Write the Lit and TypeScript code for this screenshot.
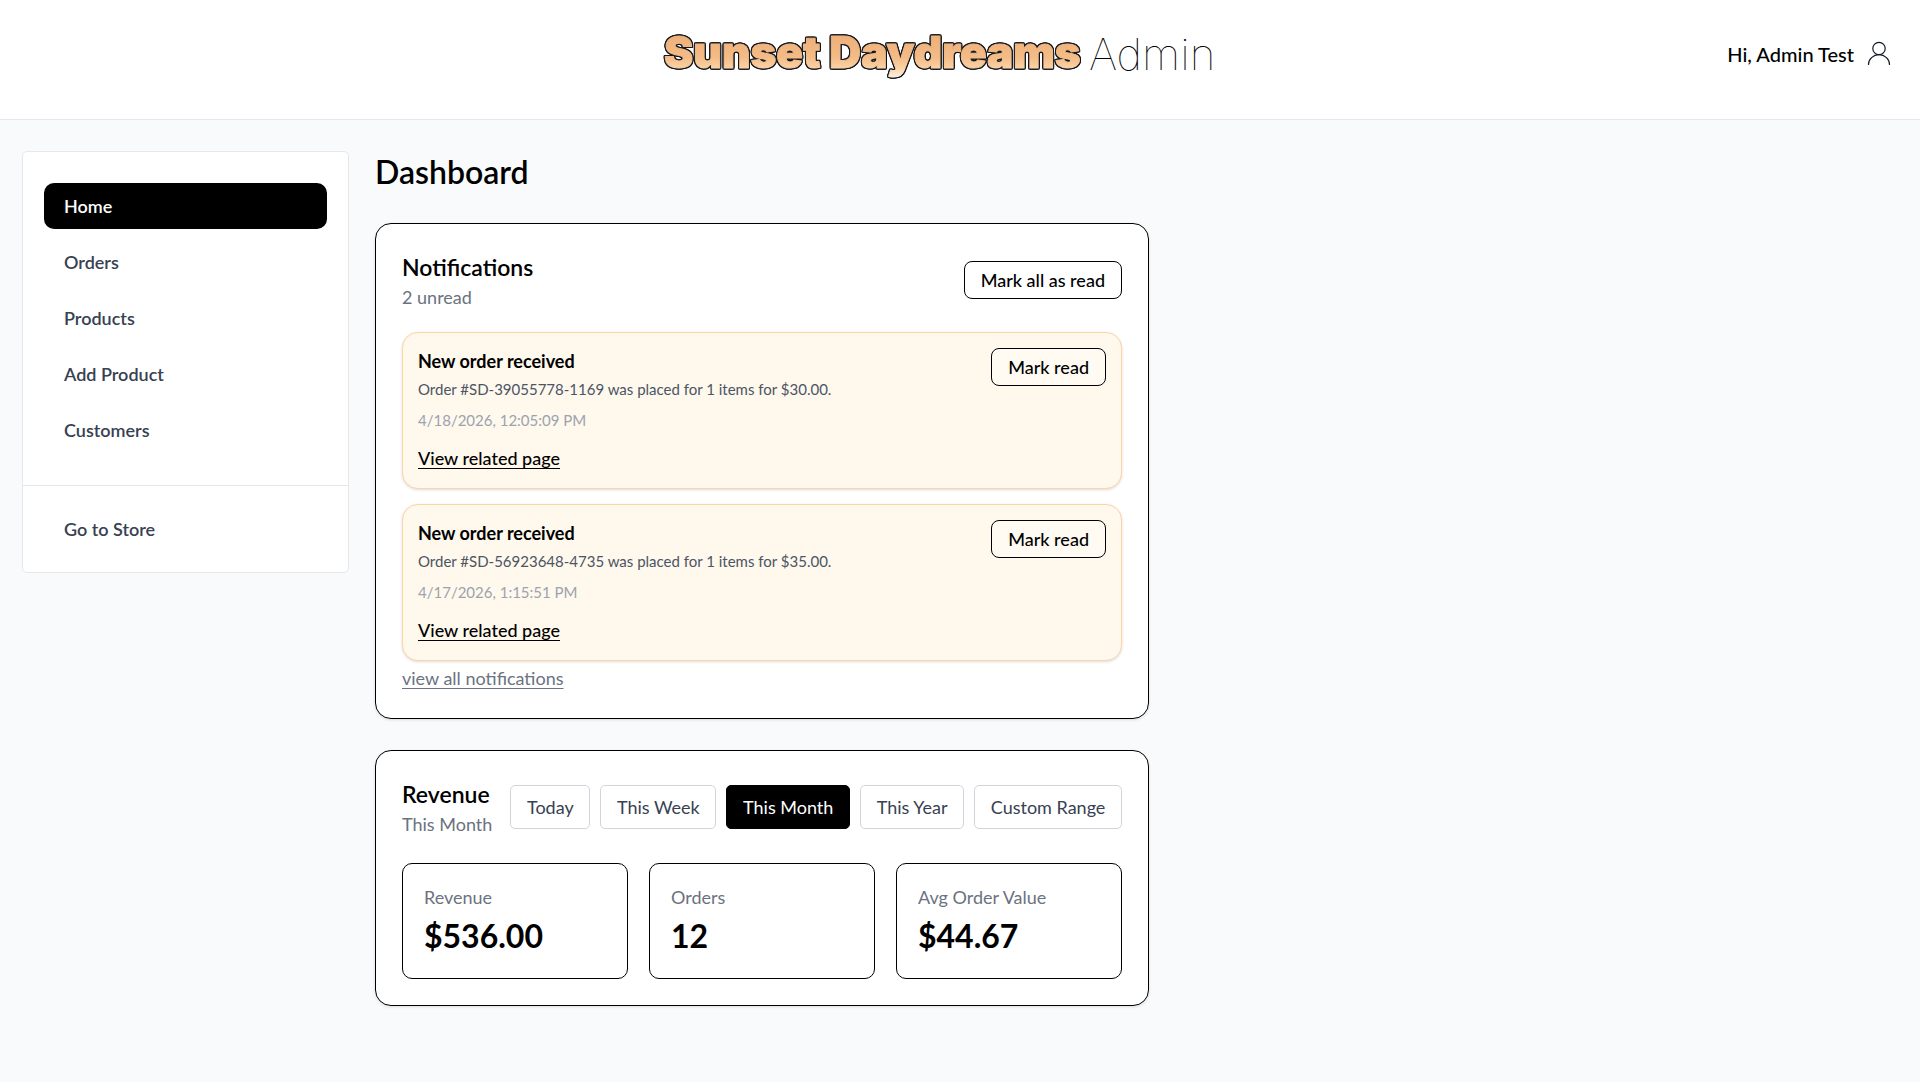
import { LitElement, html, css } from "lit";
import { customElement, state } from "lit/decorators.js";
import { classMap } from "lit/directives/class-map.js";

interface OrderNotice {
  title: string;
  message: string;
  time: string;
}

@customElement("app-root")
export class AppRoot extends LitElement {
  static styles = css`
    :host {
      display: block;
      min-height: 100vh;
      background: #f9fafc;
      color: #000;
      font-family: Lato, "Open Sans", sans-serif;
      font-size: 18px;
      line-height: 24px;
    }
    * {
      box-sizing: border-box;
    }
    h1, h2, h3, p, ul {
      margin: 0;
      padding: 0;
    }
    a {
      color: inherit;
    }
    button {
      font: inherit;
      color: inherit;
      cursor: pointer;
    }

    .header {
      display: flex;
      justify-content: space-between;
      align-items: center;
      padding: 24px 28px 35px 26px;
      background: #fff;
      border-bottom: 1px solid #e5e7eb;
    }
    .spacer {
      width: 125px;
    }
    .brand {
      display: flex;
      align-items: center;
      text-decoration: none;
    }
    .wordmark {
      font-family: Inter, sans-serif;
      font-weight: 900;
      font-size: 44px;
      fill: url(#sunset);
      stroke: url(#sunset);
      stroke-width: 1px;
      stroke-linejoin: round;
      filter: drop-shadow(1px 0 #14181f) drop-shadow(-1px 0 #14181f)
        drop-shadow(0 1px #14181f) drop-shadow(0 -1px #14181f);
    }
    .role {
      font-family: Inter, sans-serif;
      font-weight: 100;
      font-size: 44px;
      line-height: 60px;
    }
    .account {
      display: flex;
      align-items: center;
      gap: 12px;
      font-size: 20px;
      font-weight: 500;
      text-decoration: none;
    }

    .layout {
      display: flex;
      align-items: flex-start;
      gap: 26px;
      padding: 31px 22px 40px;
    }
    .sidebar {
      flex: 0 0 327px;
      background: #fff;
      border: 1px solid #e5e7eb;
      border-radius: 5px;
    }
    .menu {
      display: flex;
      flex-direction: column;
      gap: 10px;
      padding: 31px 21px 32px;
      list-style: none;
    }
    .menu + .menu {
      padding: 20px 21px;
      border-top: 1px solid #e5e7eb;
    }
    .item {
      display: block;
      padding: 11px 20px;
      border-radius: 10px;
      color: #374151;
      font-weight: 600;
      text-decoration: none;
    }
    .item.current {
      background: #000;
      color: #fff;
    }

    .content {
      flex: 1 1 0;
      max-width: 774px;
      display: flex;
      flex-direction: column;
      gap: 31px;
    }
    .title {
      font-size: 32px;
      line-height: 41px;
      font-weight: 600;
    }
    .panel {
      padding: 26px;
      background: #fff;
      border: 1px solid #000;
      border-radius: 16px;
      box-shadow: 0 1px 3px rgba(0, 0, 0, 0.12);
    }
    .panel-head {
      display: flex;
      justify-content: space-between;
      align-items: center;
      gap: 18px;
      padding-bottom: 22px;
    }
    .heading {
      font-size: 23px;
      line-height: 34px;
      font-weight: 600;
    }
    .sub {
      line-height: 26px;
      color: #6b7280;
    }
    .outline {
      flex: none;
      padding: 6px 16px;
      background: #fff;
      border: 1px solid #000;
      border-radius: 8px;
      font-weight: 500;
    }
    .notices {
      display: flex;
      flex-direction: column;
      gap: 15px;
      list-style: none;
    }
    .notice {
      display: flex;
      justify-content: space-between;
      align-items: flex-start;
      padding: 15px;
      background: #fff8ed;
      border: 1px solid #fdd5a5;
      border-radius: 16px;
      box-shadow: 0 1px 3px rgba(0, 0, 0, 0.14);
    }
    .notice .outline {
      background: #fffbf3;
    }
    .notice-title {
      font-size: 18px;
      line-height: 26px;
      font-weight: 700;
    }
    .message {
      font-size: 15px;
      line-height: 30px;
      color: #4b5563;
    }
    .time {
      font-size: 15px;
      line-height: 32px;
      color: #9ca3af;
    }
    .related {
      display: block;
      width: fit-content;
      padding: 8px 0 1px;
      line-height: 28px;
      font-weight: 500;
      text-underline-offset: 3px;
    }
    .all {
      display: block;
      width: fit-content;
      margin-top: 3px;
      line-height: 28px;
      color: #6b7280;
      text-underline-offset: 3px;
    }

    .ranges {
      flex: 1;
      display: flex;
      gap: 10px;
    }
    .range {
      flex: 1 1 auto;
      padding: 9px 10px;
      background: #fff;
      border: 1px solid #d1d5db;
      border-radius: 5px;
      color: #374151;
      white-space: nowrap;
    }
    .range.active {
      background: #000;
      border-color: #000;
      color: #fff;
    }
    .revenue-head {
      padding-bottom: 26px;
    }
    .stats {
      display: grid;
      grid-template-columns: repeat(3, 1fr);
      gap: 21px;
    }
    .stat {
      padding: 20px 21px;
      border: 1px solid #000;
      border-radius: 10px;
    }
    .label {
      line-height: 26px;
      color: #6b7280;
    }
    .value {
      padding: 6px 0 2px;
      font-size: 32px;
      line-height: 40px;
      font-weight: 700;
    }
  `;

  @state() private range = "This Month";

  private pages = ["Home", "Orders", "Products", "Add Product", "Customers"];
  private rangeNames = ["Today", "This Week", "This Month", "This Year", "Custom Range"];
  private notices: OrderNotice[] = [
    {
      title: "New order received",
      message: "Order #SD-39055778-1169 was placed for 1 items for $30.00.",
      time: "4/18/2026, 12:05:09 PM",
    },
    {
      title: "New order received",
      message: "Order #SD-56923648-4735 was placed for 1 items for $35.00.",
      time: "4/17/2026, 1:15:51 PM",
    },
  ];
  private stats = [
    ["Revenue", "$536.00"],
    ["Orders", "12"],
    ["Avg Order Value", "$44.67"],
  ];

  render() {
    return html`
      <header class="header">
        <span class="spacer"></span>
        <a class="brand" href="#">
          <svg width="426" height="60" viewBox="0 0 426 60">
            <defs>
              <linearGradient id="sunset" gradientUnits="userSpaceOnUse" x1="0" y1="12" x2="0" y2="54">
                <stop offset="0" stop-color="#eeb07a" />
                <stop offset="0.5" stop-color="#f3bb86" />
                <stop offset="0.75" stop-color="#fbd0a2" />
                <stop offset="1" stop-color="#fff3e4" />
              </linearGradient>
            </defs>
            <text class="wordmark" x="1" y="44">Sunset Daydreams</text>
          </svg>
          <span class="role">Admin</span>
        </a>
        <a class="account" href="#account">
          <span>Hi, Admin Test</span>
          <svg width="26" height="26" viewBox="0 0 26 26" fill="none" stroke="#111827" stroke-width="1.2" aria-hidden="true">
            <circle cx="13" cy="7.5" r="6.2" />
            <path d="M2.5 24v-.5a10.5 9.8 0 0 1 21 0v.5" />
          </svg>
        </a>
      </header>
      <div class="layout">
        <nav class="sidebar">
          <ul class="menu">
            ${this.pages.map(
              (page, i) => html`<li>
                <a class=${classMap({ item: true, current: i === 0 })} href="#">${page}</a>
              </li>`
            )}
          </ul>
          <ul class="menu">
            <li><a class="item" href="#store">Go to Store</a></li>
          </ul>
        </nav>
        <main class="content">
          <h1 class="title">Dashboard</h1>
          <section class="panel">
            <div class="panel-head">
              <div>
                <h2 class="heading">Notifications</h2>
                <p class="sub">2 unread</p>
              </div>
              <button class="outline">Mark all as read</button>
            </div>
            <ul class="notices">
              ${this.notices.map(
                (n) => html`<li class="notice">
                  <div>
                    <h3 class="notice-title">${n.title}</h3>
                    <p class="message">${n.message}</p>
                    <p class="time">${n.time}</p>
                    <a class="related" href="#order">View related page</a>
                  </div>
                  <button class="outline">Mark read</button>
                </li>`
              )}
            </ul>
            <a class="all" href="#notifications">view all notifications</a>
          </section>
          <section class="panel">
            <div class="panel-head revenue-head">
              <div>
                <h2 class="heading">Revenue</h2>
                <p class="sub">${this.range}</p>
              </div>
              <div class="ranges">
                ${this.rangeNames.map(
                  (name) => html`<button
                    class=${classMap({ range: true, active: name === this.range })}
                    aria-pressed=${name === this.range}
                    @click=${() => (this.range = name)}
                  >${name}</button>`
                )}
              </div>
            </div>
            <div class="stats">
              ${this.stats.map(
                ([label, value]) => html`<div class="stat">
                  <p class="label">${label}</p>
                  <p class="value">${value}</p>
                </div>`
              )}
            </div>
          </section>
        </main>
      </div>
    `;
  }
}
